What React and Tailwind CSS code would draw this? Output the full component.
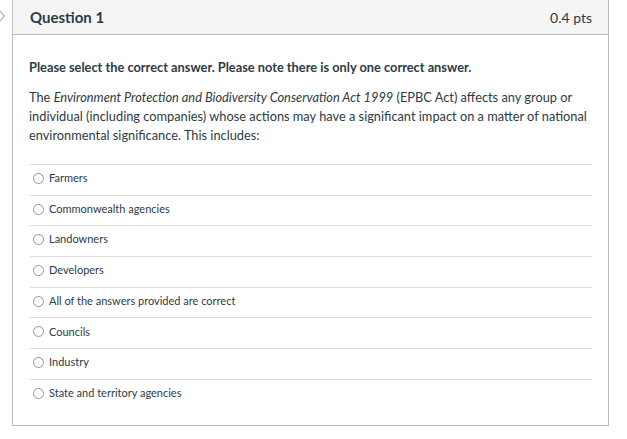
export default function App() {
  const options = [
    "Farmers",
    "Commonwealth agencies",
    "Landowners",
    "Developers",
    "All of the answers provided are correct",
    "Councils",
    "Industry",
    "State and territory agencies",
  ];
  return (
    <div className="relative w-[627px] h-[439px] bg-white overflow-hidden text-[#2d3b45]" style={{ fontFamily: "Lato, 'Open Sans', sans-serif" }}>
      <svg className="absolute left-0 top-[9px]" width="6" height="14" viewBox="0 0 6 14">
        <path d="M-1 1 L4.5 7 L-1 13" fill="none" stroke="#aab4bc" strokeWidth="1.2" />
      </svg>
      <div className="ml-[12px] w-[597px] h-[426px] border-x border-b border-[#b8bcbf] flex flex-col">
        <div className="h-[35px] shrink-0 bg-[#f5f5f5] border-b border-[#b8bcbf] flex items-center justify-between pl-[17px] pr-[16px]">
          <span className="text-[15px] font-bold">Question 1</span>
          <span className="text-[14px]">0.4 pts</span>
        </div>
        <div className="pl-[16px] pr-[16px] pt-[23px]">
          <p className="text-[12.8px] font-bold leading-[19px]">Please select the correct answer. Please note there is only one correct answer.</p>
          <p className="mt-[11px] text-[12.8px] leading-[19px]">
            The <em>Environment Protection and Biodiversity Conservation Act 1999</em> (EPBC Act) affects any group or individual (including companies) whose actions may have a significant impact on a matter of national environmental significance. This includes:
          </p>
          <div className="mt-[19px]">
            {options.map((o, i) => (
              <div key={i} className="h-[30.7px] border-t border-[#dcdedf] flex items-center pl-[4px] pb-[3px]">
                <span className="w-[11px] h-[11px] rounded-full border border-[#8b969e] bg-white mr-[5px] shrink-0" />
                <span className="text-[11px]">{o}</span>
              </div>
            ))}
          </div>
        </div>
      </div>
    </div>
  );
}
